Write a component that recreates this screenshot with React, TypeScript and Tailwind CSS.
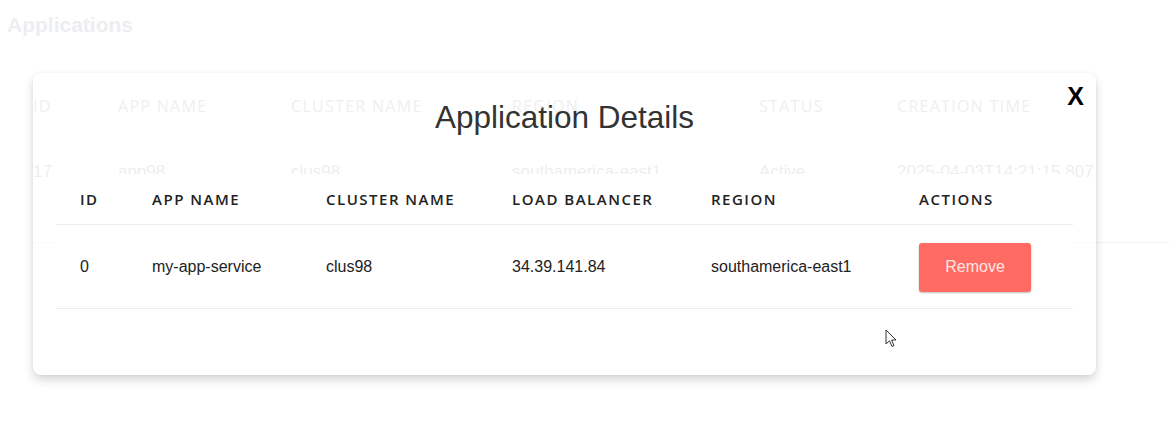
const bgHeaders = ["ID", "APP NAME", "CLUSTER NAME", "REGION", "STATUS", "CREATION TIME"];
const bgRow = ["17", "app98", "clus98", "southamerica-east1", "Active", "2025-04-03T14:21:15.807"];

const headers = ["ID", "APP NAME", "CLUSTER NAME", "LOAD BALANCER", "REGION", "ACTIONS"];
const app = { id: "0", name: "my-app-service", cluster: "clus98", lb: "34.39.141.84", region: "southamerica-east1" };

function Cursor() {
  return (
    <svg width="13" height="20" viewBox="0 0 13 20" className="absolute left-[885px] top-[329px]">
      <path
        d="M1 1 L1 15 L4.5 11.8 L7 17.5 L9 16.6 L6.6 11 L11 11 Z"
        fill="white"
        stroke="#333"
        strokeWidth="1"
        strokeLinejoin="round"
      />
    </svg>
  );
}

function DetailsModal() {
  return (
    <div className="absolute left-[33px] top-[73px] w-[1063px] h-[302px] rounded-lg bg-white/60 shadow-[0_5px_10px_rgba(0,0,0,0.16),0_0_3px_rgba(0,0,0,0.06)] px-[23px] pt-[22px]">
      <button className="absolute right-[12px] top-[11px] font-['Liberation_Sans_Narrow','Liberation_Sans',sans-serif] font-bold text-[25px] leading-none text-black">
        X
      </button>
      <h2 className="text-center font-['Liberation_Sans',Arial,sans-serif] text-[31.5px] leading-[44px] text-[#333]">
        Application Details
      </h2>
      <div className="mt-[35px] bg-white">
        <div className="grid grid-cols-[72px_174px_186px_199px_208px_177px] border-b border-[#ececec] h-[51px] items-center font-['Open_Sans',sans-serif] font-semibold text-[15px] tracking-[1.5px] text-[#222]">
          {headers.map((h) => (
            <div key={h} className="pl-6">{h}</div>
          ))}
        </div>
        <div className="grid grid-cols-[72px_174px_186px_199px_208px_177px] border-b border-[#ececec] h-[84px] items-center font-['Liberation_Sans',Arial,sans-serif] text-[16px] text-[#222]">
          <div className="pl-6">{app.id}</div>
          <div className="pl-6">{app.name}</div>
          <div className="pl-6">{app.cluster}</div>
          <div className="pl-6">{app.lb}</div>
          <div className="pl-6">{app.region}</div>
          <div className="pl-6">
            <button className="w-[112px] h-[49px] mt-[1px] rounded-[3px] bg-[#ff6b63] text-[#fde6e4] text-[16px] shadow-[0_1px_2px_rgba(0,0,0,0.25)]">
              Remove
            </button>
          </div>
        </div>
      </div>
    </div>
  );
}

export default function App() {
  return (
    <div className="relative h-[432px] w-full overflow-hidden bg-white">
      <div className="pl-[7px] pt-[13px]">
        <h1 className="font-['Liberation_Sans',Arial,sans-serif] font-bold text-[21px] leading-[24px] text-[#eceef1]">
          Applications
        </h1>
      </div>
      <div className="mt-[49px] ml-[33px]">
        <div className="grid grid-cols-[85px_173px_221px_247px_138px_1fr] h-[40px] items-center font-['Open_Sans',sans-serif] text-[16px] tracking-[1.3px] text-[#d6d6d6]">
          {bgHeaders.map((h) => (
            <div key={h}>{h}</div>
          ))}
        </div>
        <div className="grid grid-cols-[85px_173px_221px_247px_138px_1fr] pt-[34px] pb-[58px] border-b border-[#f3f3f3] font-['Liberation_Sans',Arial,sans-serif] text-[17px] leading-[24px] text-[#d4d4d4]">
          {bgRow.map((c) => (
            <div key={c} className="whitespace-nowrap">{c}</div>
          ))}
        </div>
      </div>
      <DetailsModal />
      <Cursor />
    </div>
  );
}
